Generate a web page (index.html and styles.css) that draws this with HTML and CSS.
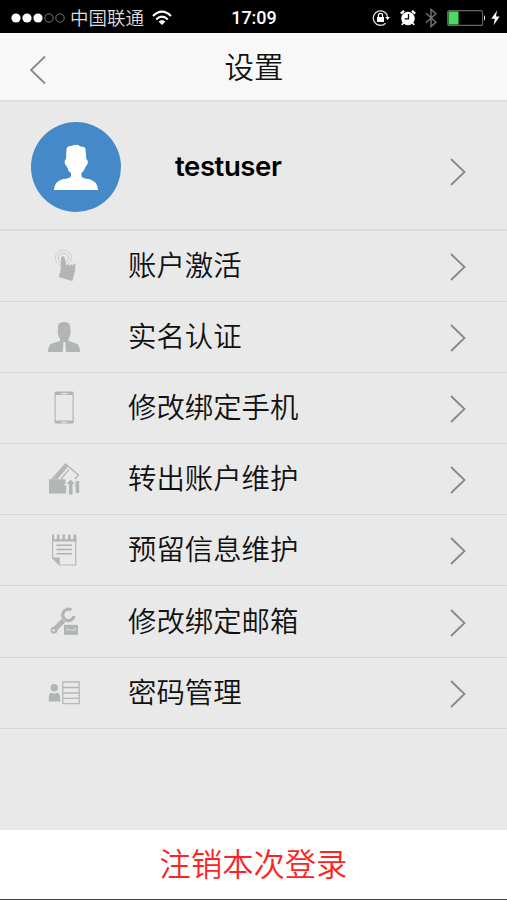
FILE: index.html
```html
<!DOCTYPE html>
<html lang="zh-CN">
<head>
    <meta charset="UTF-8">
    <meta name="viewport" content="width=device-width, initial-scale=1.0">
    <title>设置</title>
    <link rel="stylesheet" href="styles.css">
</head>
<body>
    <div class="status-bar">
        <div class="status-left">
            <svg class="signal" width="54" height="12" viewBox="0 0 54 12">
                <g fill="#fff">
                    <circle cx="5" cy="6" r="4.6"/>
                    <circle cx="16" cy="6" r="4.6"/>
                    <circle cx="27" cy="6" r="4.6"/>
                </g>
                <g fill="none" stroke="#777" stroke-width="1">
                    <circle cx="38" cy="6" r="4.2"/>
                    <circle cx="49" cy="6" r="4.2"/>
                </g>
            </svg>
            <span class="carrier">中国联通</span>
            <svg class="wifi" width="20" height="16" viewBox="0 0 20 16">
                <g fill="none" stroke="#fff" stroke-width="2.1">
                    <path d="M1 6 Q10 -2.6 19 6"/>
                    <path d="M4.2 9.4 Q10 4 15.8 9.4"/>
                </g>
                <path d="M6.6 11.6 Q10 8.6 13.4 11.6 L10 15 Z" fill="#fff"/>
            </svg>
        </div>
        <span class="time">17:09</span>
        <div class="status-right">
            <svg width="18" height="18" viewBox="0 0 18 18">
                <path d="M13.6 14.2 A7.2 7.2 0 1 1 15.7 8.6" fill="none" stroke="#ddd" stroke-width="1.3"/>
                <path d="M13.2 8 H18 L15.6 11 Z" fill="#fff"/>
                <rect x="5" y="8" width="7" height="5" fill="#fff"/>
                <path d="M6.5 8 V6.3 A2 2 0 0 1 10.5 6.3 V8" fill="none" stroke="#fff" stroke-width="1.3"/>
            </svg>
            <svg class="alarm" width="16" height="18" viewBox="0 0 16 18">
                <circle cx="8" cy="9.5" r="6.8" fill="#fff"/>
                <path d="M0.8 4.6 L4 1.8 M15.2 4.6 L12 1.8" stroke="#fff" stroke-width="2.2"/>
                <path d="M3.2 14 L1.8 16 M12.8 14 L14.2 16" stroke="#fff" stroke-width="1.6"/>
                <path d="M8.5 5 V9.8 H4.6" fill="none" stroke="#000" stroke-width="1.3"/>
            </svg>
            <svg class="bluetooth" width="12" height="20" viewBox="0 0 12 20">
                <path d="M1 5.3 L11 14.3 L6 18.6 V1.4 L11 5.7 L1 14.7" fill="none" stroke="#777" stroke-width="1.4"/>
            </svg>
            <svg class="battery" width="40" height="16" viewBox="0 0 40 16">
                <rect x="0.6" y="0.6" width="35" height="14.8" rx="2" fill="none" stroke="#666" stroke-width="1.1"/>
                <rect x="1.5" y="1.5" width="10" height="13" fill="#4cd964"/>
                <path d="M37 5 Q39.4 8 37 11 Z" fill="#eee"/>
            </svg>
            <svg class="charge" width="9" height="16" viewBox="0 0 9 16">
                <path d="M6 0.5 L0.3 8.8 H3.8 L2.6 15.2 L8.6 6.6 H5 Z" fill="#fff"/>
            </svg>
        </div>
    </div>

    <div class="header">
        <svg class="back" width="18" height="30" viewBox="0 0 18 30">
            <path d="M16 1.5 L2 15 L16 28.5"/>
        </svg>
        <h1>设置</h1>
    </div>

    <div class="user">
        <svg class="avatar" width="90" height="90" viewBox="0 0 90 90">
            <circle cx="45" cy="45" r="45" fill="#4589c8"/>
            <path d="M35.5 27 Q36 24 40 24 Q46 21.800 48 23.500 L49 24.500 Q54 24 54.500 27 L55.300 37 Q58 39 56 43 Q54.500 44.500 54 46 Q52.500 50 50.500 51 V54 Q51 56.500 58 57 Q67 59.500 67 68 H23 Q23 59.500 32 57 Q39.500 56.500 40 54 V51 Q37.500 50 36.500 46 Q35.500 44 34.500 43 Q32.500 39 35 37 Z" fill="#fff"/>
        </svg>
        <span class="username">testuser</span>
        <svg class="arrow" width="18" height="28" viewBox="0 0 18 28"><path d="M2 1 L15.500 14 L2 27"/></svg>
    </div>

    <ul class="menu">
        <li>
            <svg class="icon" width="40" height="40" viewBox="0 0 40 40">
                <circle cx="19.300" cy="12" r="8" fill="none" stroke="#c8caca" stroke-width="0.900"/>
                <circle cx="19.300" cy="12" r="5" fill="none" stroke="#c3c5c5" stroke-width="0.900"/>
                <path d="M17 12.500 Q17 10.300 18.700 10.200 Q20.400 10.200 20.800 12 L22.300 19.500 L23.300 18.600 L24.800 18.800 L25.600 20 L26.600 18.400 L28 18.500 L28.700 20 L29.700 17.500 L31.400 17.800 L31 25 L28.300 35 L14.600 31 L16.500 25 Z"/>
            </svg>
            <span>账户激活</span>
            <svg class="arrow" width="18" height="28" viewBox="0 0 18 28"><path d="M2 1 L15.500 14 L2 27"/></svg>
        </li>
        <li>
            <svg class="icon" width="40" height="40" viewBox="0 0 40 40">
                <path d="M14 9 Q14.500 5 20 5 Q25.500 5 26.300 9 V13 Q27.500 14 26.300 17 Q25.500 21 24.500 22 V24 L32 26.500 Q36 28 36 35 H22 L21.300 25 H19.500 L18.800 35 H4 Q4 28 8 26.500 L16 24 V22 Q14.800 20 14 17 Q12.700 14 14 13 Z"/>
            </svg>
            <span>实名认证</span>
            <svg class="arrow" width="18" height="28" viewBox="0 0 18 28"><path d="M2 1 L15.500 14 L2 27"/></svg>
        </li>
        <li>
            <svg class="icon" width="40" height="40" viewBox="0 0 40 40">
                <path fill-rule="evenodd" d="M12 3.500 H28.300 Q29.700 3.500 29.700 5 V34 Q29.700 35.500 28.300 35.500 H12 Q10.500 35.500 10.500 34 V5 Q10.500 3.500 12 3.500 Z M11.700 7 V32.500 H28.500 V7 Z"/>
                <path d="M17 5.700 H23.500 M18 34.300 H22.500" stroke="#e5e5e5" stroke-width="1.200"/>
            </svg>
            <span>修改绑定手机</span>
            <svg class="arrow" width="18" height="28" viewBox="0 0 18 28"><path d="M2 1 L15.500 14 L2 27"/></svg>
        </li>
        <li>
            <svg class="icon" width="40" height="40" viewBox="0 0 40 40">
                <path d="M8 20 L21.500 5 L34.500 16 L31 20" fill="none" stroke="#b2b5b5" stroke-width="1.300"/>
                <path d="M9 20 L21.500 5.500 L24 7.800 L13.500 20 Z"/>
                <path d="M17 20 L25 10.500" stroke="#b2b5b5" stroke-width="1.200"/>
                <path d="M5 20.300 H21.500 V24 L19.500 26.500 H22.200 V34.500 H5 Z"/>
                <path d="M26.700 20.500 L30.800 25 H28.500 V35.500 H25 V25 H22.700 Z"/>
                <path d="M31.700 22 H35.200 V34 H31.700 V27.500 H30 L31.700 26 Z"/>
            </svg>
            <span>转出账户维护</span>
            <svg class="arrow" width="18" height="28" viewBox="0 0 18 28"><path d="M2 1 L15.500 14 L2 27"/></svg>
        </li>
        <li>
            <svg class="icon" width="40" height="40" viewBox="0 0 40 40">
                <path d="M8.600 7 V28 L15.500 35 H31.700 V7" fill="none" stroke="#b5b7b7" stroke-width="1.200"/>
                <path d="M8 27.500 H15.700 V35.500 Z"/>
                <path d="M8 4.500 H10 V8 Q11.500 11.500 13 8 V4.500 H15.500 V8 Q17 11.500 18.500 8 V4.500 H21 V8 Q22.500 11.500 24 8 V4.500 H26.500 V8 Q28 11.500 29.500 8 V4.500 H32.300 V11.500 H8 Z"/>
                <path d="M12.500 15.300 H28 M12.500 19.500 H28 M12.500 23.700 H28" stroke="#aeb1b1" stroke-width="1.500"/>
            </svg>
            <span>预留信息维护</span>
            <svg class="arrow" width="18" height="28" viewBox="0 0 18 28"><path d="M2 1 L15.500 14 L2 27"/></svg>
        </li>
        <li>
            <svg class="icon" width="40" height="40" viewBox="0 0 40 40">
                <path d="M27.300 8 A5.700 5.700 0 1 0 30 14" fill="none" stroke="#b2b5b5" stroke-width="3.300"/>
                <path d="M19.500 18.500 L10.500 27.500" stroke="#b2b5b5" stroke-width="5"/>
                <circle cx="10" cy="28.200" r="3.400"/>
                <circle cx="9.700" cy="28.300" r="1.300" fill="#e9e9e9"/>
                <path fill="#b2b5b5" d="M20 22.800 H34 V32.800 H20 Z"/>
                <path d="M23 26 V28 H31.200 V26" fill="none" stroke="#e0e0e0" stroke-width="1"/>
            </svg>
            <span>修改绑定邮箱</span>
            <svg class="arrow" width="18" height="28" viewBox="0 0 18 28"><path d="M2 1 L15.500 14 L2 27"/></svg>
        </li>
        <li>
            <svg class="icon" width="40" height="40" viewBox="0 0 40 40">
                <circle cx="10.200" cy="14.700" r="3.700"/>
                <path d="M4.800 28.500 V24.500 Q5 20 8 19.800 L10.300 21 L12.500 19.800 Q16 20 16.200 24.500 V28.500 Z"/>
                <path d="M18.800 9 H35.200 V30.700 H18.800 Z M18.800 14.500 H35.200 M18.800 20 H35.200 M18.800 25.300 H35.200" fill="none" stroke="#b5b8b8" stroke-width="1.300"/>
            </svg>
            <span>密码管理</span>
            <svg class="arrow" width="18" height="28" viewBox="0 0 18 28"><path d="M2 1 L15.500 14 L2 27"/></svg>
        </li>
    </ul>

    <button class="logout" type="button">注销本次登录</button>
</body>
</html>
```

FILE: styles.css
```css
* {
    box-sizing: border-box;
}
body {
    display: flex;
    flex-direction: column;
    height: 900px;
    margin: 0;
    overflow: hidden;
    background-color: #e9e9e9;
    color: #111;
    font-family: "Liberation Sans", "Noto Sans CJK SC", sans-serif;
}
svg {
    display: block;
    flex: none;
}
.status-bar {
    display: grid;
    grid-template-columns: 1fr auto 1fr;
    align-items: center;
    height: 33px;
    padding: 2px 7px 0 11px;
    background-color: #000;
    color: #fff;
}
.status-left, .status-right {
    display: flex;
    align-items: center;
}
.status-right {
    justify-content: flex-end;
}
.carrier {
    margin-left: 5px;
    padding-top: 2px;
    color: #ddd;
    font-size: 18.5px;
    font-weight: 350;
    line-height: 28px;
}
.wifi {
    margin-left: 8px;
}
.time {
    margin-left: -3px;
    font-family: Roboto, sans-serif;
    font-size: 18px;
    font-weight: 500;
}
.alarm {
    margin-left: 10px;
}
.bluetooth {
    margin-left: 9px;
}
.battery {
    margin-left: 10px;
}
.charge {
    margin-left: 4px;
}
.header {
    display: grid;
    grid-template-columns: 54px 1fr 54px;
    align-items: center;
    height: 69px;
    background-color: #f8f8f8;
    border-bottom: 2px solid #dedede;
}
.header h1 {
    margin: 0;
    padding: 2px 0 0 1px;
    font-size: 29.5px;
    font-weight: 350;
    line-height: 40px;
    text-align: center;
}
.back {
    margin: 6px 0 0 29px;
}
.back path, .arrow path {
    fill: none;
    stroke: #888;
    stroke-width: 1.8;
}
.user {
    display: flex;
    align-items: center;
    height: 129px;
    padding: 0 40px 0 31px;
    border-bottom: 2px solid #dcdcdc;
}
.avatar {
    margin-top: 2px;
}
.username {
    margin-left: 54px;
    color: #000;
    font-family: Inter, sans-serif;
    font-size: 27.5px;
    font-weight: 600;
    letter-spacing: -0.4px;
}
.arrow {
    margin-left: auto;
}
.user .arrow {
    margin-top: 12px;
}
.menu {
    margin: 0;
    padding: 0;
    list-style: none;
}
.menu li {
    display: flex;
    align-items: center;
    height: 71.1px;
    padding: 0 40px 0 44px;
    border-bottom: 1px solid #d6d6d6;
}
.menu span {
    margin-left: 44px;
    font-size: 28.4px;
    font-weight: 350;
    line-height: 40px;
}
.menu .arrow {
    margin-top: 2px;
}
.icon {
    fill: #b2b5b5;
}
.logout {
    height: 70px;
    margin-top: auto;
    padding: 0 0 5px;
    border: none;
    border-bottom: 1px solid #444;
    background-color: #fff;
    color: #f22;
    font-family: inherit;
    font-size: 31.3px;
    font-weight: 350;
}
```
